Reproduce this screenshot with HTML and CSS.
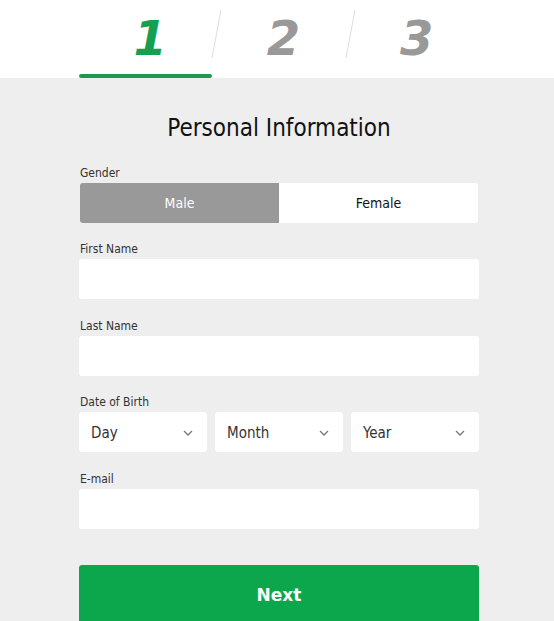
FILE: index.html
```html
<!DOCTYPE html>
<html>
<head>
<meta charset="utf-8">
<link rel="stylesheet" href="styles.css">
</head>
<body>
<header class="steps">
  <div class="steps-inner">
    <div class="step active"><span class="num">1</span></div>
    <div class="step"><span class="num">2</span></div>
    <div class="step"><span class="num">3</span></div>
  </div>
</header>
<main class="form">
  <h1 class="title">Personal Information</h1>
  <div class="field">
    <div class="label">Gender</div>
    <div class="toggle">
      <div class="opt selected">Male</div>
      <div class="opt">Female</div>
    </div>
  </div>
  <div class="field">
    <div class="label">First Name</div>
    <div class="input"></div>
  </div>
  <div class="field">
    <div class="label">Last Name</div>
    <div class="input"></div>
  </div>
  <div class="field">
    <div class="label">Date of Birth</div>
    <div class="selects">
      <div class="select"><span>Day</span><svg class="chev" width="10" height="6" viewBox="0 0 10 6"><path d="M1 1 L5 5 L9 1" fill="none" stroke="#777" stroke-width="1.3"/></svg></div>
      <div class="select"><span>Month</span><svg class="chev" width="10" height="6" viewBox="0 0 10 6"><path d="M1 1 L5 5 L9 1" fill="none" stroke="#777" stroke-width="1.3"/></svg></div>
      <div class="select"><span>Year</span><svg class="chev" width="10" height="6" viewBox="0 0 10 6"><path d="M1 1 L5 5 L9 1" fill="none" stroke="#777" stroke-width="1.3"/></svg></div>
    </div>
  </div>
  <div class="field">
    <div class="label">E-mail</div>
    <div class="input"></div>
  </div>
  <button class="next">Next</button>
</main>
</body>
</html>
```
FILE: styles.css
```css
* {
  box-sizing: border-box;
}
html, body {
  margin: 0;
  background: #eeeeee;
  font-family: "DejaVu Sans Condensed", "DejaVu Sans", sans-serif;
  height: 100%;
  overflow: hidden;
}
body {
  padding: 0 0 0 4px;
}
.steps {
  background: #ffffff;
  height: 78px;
  margin-left: -4px;
  padding-left: 4px;
}
.steps-inner {
  width: 400px;
  margin: 0 auto;
  display: flex;
  height: 78px;
}
.step {
  flex: 1;
  position: relative;
  display: flex;
  justify-content: center;
  align-items: flex-start;
}
.step + .step::before {
  content: "";
  position: absolute;
  left: 4px;
  top: 10px;
  width: 1px;
  height: 48px;
  background: #dddddd;
  transform: skewX(-10.6deg);
}
.num {
  font-family: "DejaVu Sans", sans-serif;
  font-weight: bold;
  font-style: italic;
  font-size: 48px;
  line-height: 1;
  margin-top: 14px;
  padding-left: 9px;
  color: #999999;
}
.step.active .num {
  color: #15a050;
}
.step.active::after {
  content: "";
  position: absolute;
  left: 0;
  right: 0;
  bottom: 0;
  height: 4px;
  border-radius: 2px;
  background: #1a9a50;
}
.form {
  width: 400px;
  margin: 0 auto;
  display: flex;
  flex-direction: column;
}
.title {
  margin: 36px 0 24px;
  text-align: center;
  font-weight: normal;
  font-size: 24px;
  line-height: 28px;
  color: #111111;
}
.field {
  display: flex;
  flex-direction: column;
  margin-bottom: 19.4px;
}
.label {
  font-size: 12px;
  line-height: 14px;
  color: #333333;
  margin-bottom: 3px;
  padding-left: 1px;
}
.toggle {
  display: flex;
  height: 40px;
  border-radius: 3px;
  overflow: hidden;
  margin-left: 1px;
  margin-right: 1px;
}
.opt {
  flex: 1;
  display: flex;
  align-items: center;
  justify-content: center;
  background: #ffffff;
  color: #111111;
  font-size: 14px;
}
.opt.selected {
  background: #999999;
  color: #ffffff;
}
.input {
  height: 40px;
  background: #ffffff;
  border-radius: 3px;
}
.selects {
  display: flex;
  gap: 8px;
}
.select {
  flex: 1;
  height: 40px;
  background: #ffffff;
  border-radius: 3px;
  display: flex;
  align-items: center;
  justify-content: space-between;
  padding: 2px 14px 0 12px;
  font-size: 15px;
  color: #333333;
}
.chev {
  display: block;
}
.next {
  margin-top: 17px;
  height: 58px;
  border: none;
  border-radius: 3px;
  background: #0ca64c;
  color: #ffffff;
  font-family: "DejaVu Sans", sans-serif;
  font-weight: bold;
  font-size: 17px;
  padding: 2px 0 0;
}
```
